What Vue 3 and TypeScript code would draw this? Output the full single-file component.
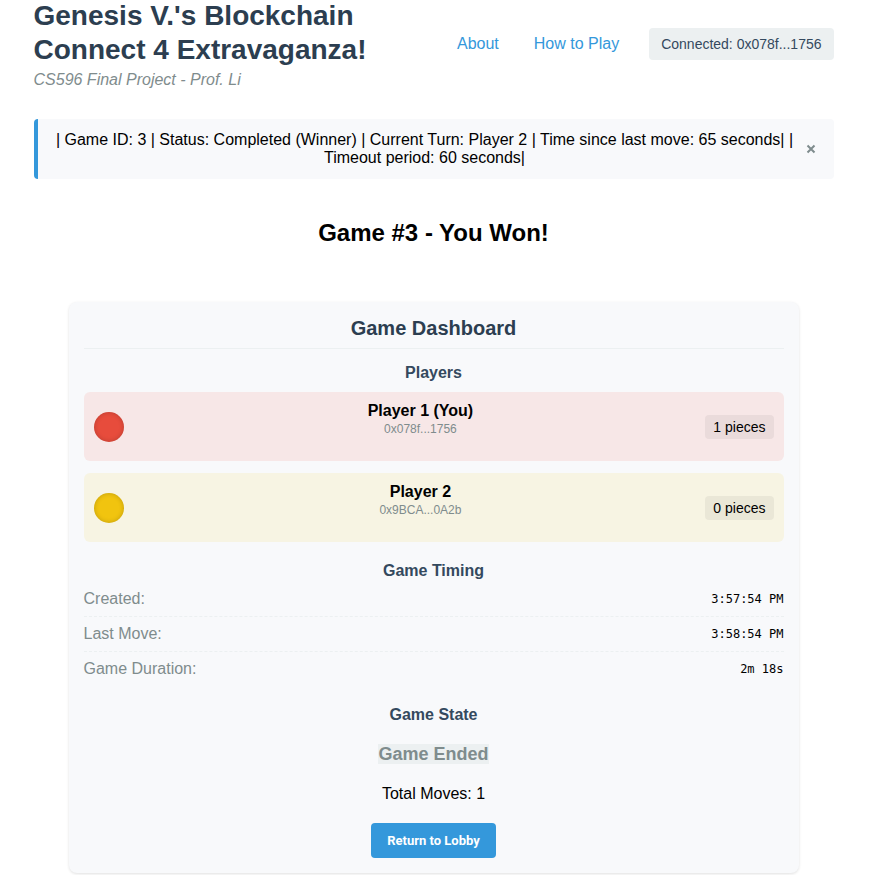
<script setup lang="ts">
interface Player {
  name: string
  address: string
  pieces: number
  color: 'red' | 'yellow'
}

const players: Player[] = [
  { name: 'Player 1 (You)', address: '0x078f...1756', pieces: 1, color: 'red' },
  { name: 'Player 2', address: '0x9BCA...0A2b', pieces: 0, color: 'yellow' },
]

const timing = [
  { label: 'Created:', value: '3:57:54 PM' },
  { label: 'Last Move:', value: '3:58:54 PM' },
  { label: 'Game Duration:', value: '2m 18s' },
]

const status =
  '| Game ID: 3 | Status: Completed (Winner) | Current Turn: Player 2 | Time since last move: 65 seconds| | Timeout period: 60 seconds|'
</script>

<template>
  <div class="page">
    <div class="container">
      <header class="header">
        <div class="brand">
          <h1>Genesis V.'s Blockchain Connect 4 Extravaganza!</h1>
          <p class="subtitle">CS596 Final Project - Prof. Li</p>
        </div>
        <nav class="nav">
          <a href="#about">About</a>
          <a href="#how-to-play">How to Play</a>
          <span class="wallet">Connected: 0x078f...1756</span>
        </nav>
      </header>

      <div class="status" role="status">
        <p>{{ status }}</p>
        <button type="button" class="dismiss" aria-label="Dismiss">
          <svg viewBox="0 0 10 10" width="10" height="10" aria-hidden="true">
            <path d="M1.5 1.5 8.5 8.5M8.5 1.5 1.5 8.5" />
          </svg>
        </button>
      </div>

      <main>
        <h2 class="result">Game #3 - You Won!</h2>

        <section class="dashboard">
          <h3>Game Dashboard</h3>

          <h4>Players</h4>
          <div class="players">
            <div v-for="p in players" :key="p.address" class="player" :class="p.color">
              <span class="disc"></span>
              <div class="info">
                <strong>{{ p.name }}</strong>
                <span class="address">{{ p.address }}</span>
              </div>
              <span class="pieces">{{ p.pieces }} pieces</span>
            </div>
          </div>

          <h4 class="timing-title">Game Timing</h4>
          <dl class="timing">
            <div v-for="t in timing" :key="t.label">
              <dt>{{ t.label }}</dt>
              <dd>{{ t.value }}</dd>
            </div>
          </dl>

          <h4 class="state-title">Game State</h4>
          <div class="state">
            <p class="outcome"><span>Game Ended</span></p>
            <p>Total Moves: 1</p>
            <button type="button" class="lobby">Return to Lobby</button>
          </div>
        </section>
      </main>
    </div>
  </div>
</template>

<style>
body {
  margin: 0;
  background: #fff;
}
</style>

<style scoped>
.page {
  display: flow-root;
  padding: 0 20px 2px 0;
  font-family: 'Liberation Sans', Arial, sans-serif;
  font-size: 16px;
  line-height: 18px;
  color: #000;
}

h1,
h2,
h3,
h4,
p,
dl,
dd {
  margin: 0;
}

.container {
  max-width: 800px;
  margin: -1px auto 0;
}

.header {
  display: flex;
  align-items: center;
  justify-content: space-between;
}

.brand {
  max-width: 380px;
}

h1 {
  font-size: 28px;
  line-height: 34px;
  color: #2c3e50;
}

.subtitle {
  margin-top: 4px;
  font-style: italic;
  color: #7f8c8d;
}

.nav {
  display: flex;
  align-items: center;
  white-space: nowrap;
}

.nav a {
  margin-right: 35px;
  color: #3498db;
  text-decoration: none;
}

.nav a + a {
  margin-right: 30px;
}

.wallet {
  padding: 8px 12px;
  border-radius: 4px;
  background: #ecf0f1;
  font-size: 14px;
  line-height: 16px;
  color: #34495e;
}

.status {
  display: flex;
  align-items: center;
  margin-top: 30px;
  padding: 12px;
  border-left: 4px solid #3498db;
  border-radius: 4px;
  background: #f8f9fb;
  text-align: center;
}

.status p {
  flex: 1;
}

.dismiss {
  display: flex;
  padding: 6px;
  border: 0;
  background: none;
  cursor: pointer;
}

.dismiss path {
  fill: none;
  stroke: #7f8c8d;
  stroke-width: 2;
}

.result {
  margin: 40px 0 55px;
  font-size: 24px;
  line-height: 28px;
  text-align: center;
}

.dashboard {
  max-width: 700px;
  margin: 0 auto;
  padding: 15px;
  border-radius: 8px;
  background: #f8f9fb;
  box-shadow: 0 1px 3px rgba(0, 0, 0, 0.12);
  text-align: center;
}

h3 {
  margin-bottom: 15px;
  padding-bottom: 9px;
  border-bottom: 1px solid #ecf0f1;
  font-size: 20px;
  line-height: 22px;
  color: #2c3e50;
}

h4 {
  margin-bottom: 10px;
  font-size: 16px;
  line-height: 18px;
  color: #34495e;
}

.players {
  display: grid;
  gap: 12px;
}

.player {
  display: flex;
  align-items: center;
  gap: 12px;
  padding: 10px;
  border-radius: 6px;
}

.player.red {
  background: #f7e7e7;
}

.player.yellow {
  background: #f7f4e3;
}

.disc {
  width: 30px;
  height: 30px;
  border-radius: 50%;
  box-shadow: inset 0 0 5px rgba(0, 0, 0, 0.2);
}

.red .disc {
  background: #e74c3c;
}

.yellow .disc {
  background: #f1c40f;
}

.info {
  flex: 1;
  display: flex;
  flex-direction: column;
  margin-right: -12px;
  padding-bottom: 13px;
}

.address {
  font-size: 12px;
  color: #7f8c8d;
}

.pieces {
  padding: 4px 8px;
  border-radius: 4px;
  background: rgba(0, 0, 0, 0.05);
  font-size: 14px;
  line-height: 16px;
}

.timing-title {
  margin: 20px 0 2px;
}

.timing div {
  display: flex;
  align-items: center;
  justify-content: space-between;
  padding: 8px 0;
  border-bottom: 1px dashed #ecf0f1;
}

.timing div:last-child {
  border-bottom: 0;
}

.timing dt {
  color: #7f8c8d;
}

.timing dd {
  font-family: 'DejaVu Sans Mono', monospace;
  font-size: 12px;
}

.state-title {
  margin: 20px 0;
}

.state {
  display: flex;
  flex-direction: column;
  align-items: center;
  gap: 20px;
}

.outcome {
  font-size: 18px;
  line-height: 21px;
  font-weight: bold;
  color: #7f8c8d;
}

.outcome span {
  background: #ecf0f1;
}

.lobby {
  padding: 10px 16px;
  border: 0;
  border-radius: 4px;
  background: #3498db;
  font: bold 13px/15px Roboto, sans-serif;
  color: #fff;
  cursor: pointer;
}
</style>
